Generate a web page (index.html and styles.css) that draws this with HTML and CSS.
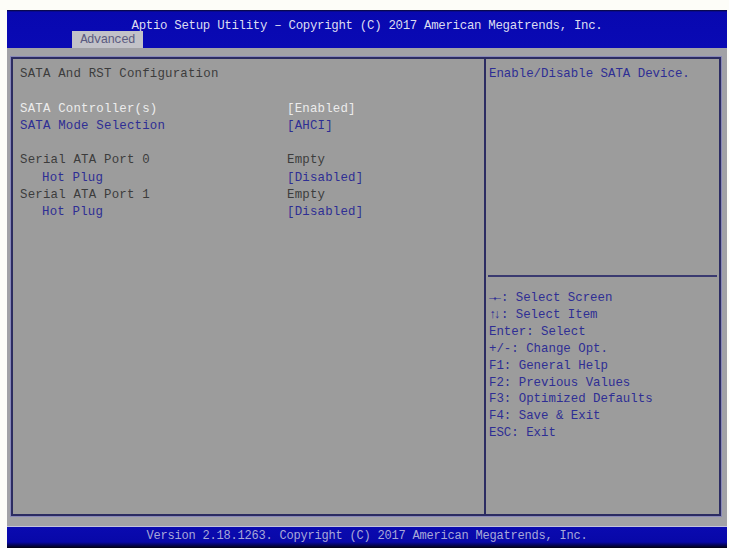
FILE: index.html
```html
<!DOCTYPE html>
<html>
<head>
<meta charset="utf-8">
<link rel="stylesheet" href="styles.css">
</head>
<body>
<div class="screen">
  <div class="header">
    <div class="title">Aptio Setup Utility – Copyright (C) 2017 American Megatrends, Inc.</div>
    <div class="tabs"><span class="tab">Advanced</span></div>
  </div>
  <div class="body">
    <div class="frame">
      <div class="main">
        <div class="row"><span class="label">SATA And RST Configuration</span></div>
        <div class="row"></div>
        <div class="row sel"><span class="label">SATA Controller(s)</span><span class="val">[Enabled]</span></div>
        <div class="row link"><span class="label">SATA Mode Selection</span><span class="val">[AHCI]</span></div>
        <div class="row"></div>
        <div class="row"><span class="label">Serial ATA Port 0</span><span class="val">Empty</span></div>
        <div class="row link"><span class="label sub">Hot Plug</span><span class="val">[Disabled]</span></div>
        <div class="row"><span class="label">Serial ATA Port 1</span><span class="val">Empty</span></div>
        <div class="row link"><span class="label sub">Hot Plug</span><span class="val">[Disabled]</span></div>
      </div>
      <div class="side">
        <div class="help">Enable/Disable SATA Device.</div>
        <div class="keys">
          <div><b class="arr">→←</b>: Select Screen</div>
          <div><b class="arr">↑↓</b>: Select Item</div>
          <div>Enter: Select</div>
          <div>+/-: Change Opt.</div>
          <div>F1: General Help</div>
          <div>F2: Previous Values</div>
          <div>F3: Optimized Defaults</div>
          <div>F4: Save &amp; Exit</div>
          <div>ESC: Exit</div>
        </div>
      </div>
    </div>
  </div>
  <div class="footer">Version 2.18.1263. Copyright (C) 2017 American Megatrends, Inc.</div>
</div>
</body>
</html>
```
FILE: styles.css
```css
html, body {
  margin: 0;
  padding: 0;
  background: #fdfdf8;
}
body {
  font-family: "Liberation Mono", "DejaVu Sans Mono", monospace;
  font-size: 12.4px;
}
.screen {
  margin: 10px 0 0 7px;
  width: 720px;
  height: 538px;
  display: flex;
  flex-direction: column;
}
.header {
  height: 38px;
  background: linear-gradient(#0a0a30 0, #0808b0 2px, #0a0ab4 100%);
  display: flex;
  flex-direction: column;
}
.title {
  color: #dcdcf0;
  text-align: center;
  height: 21px;
  line-height: 32px;
  letter-spacing: -0.3px;
}
.tabs {
  padding-left: 65px;
  display: flex;
  align-items: flex-end;
  flex: 1;
}
.tab {
  background: #c2c2c8;
  color: #5a5a80;
  height: 17px;
  line-height: 18px;
  width: 71px;
  text-align: center;
  letter-spacing: -0.6px;
}
.body {
  background: #a2a2a6;
  padding: 9px 6px 10px 4px;
  flex: 1;
  display: flex;
  border-bottom: 1px solid #c4c4dc;
}
.frame {
  flex: 1;
  border: 2px solid #2c2c62;
  box-shadow: 0 0 0 1px #8888b8;
  background: #9c9c9c;
  display: flex;
}
.main {
  width: 473px;
  border-right: 2px solid #2c2c62;
  padding: 7px 0 0 7px;
  box-sizing: border-box;
  color: #3c3c3c;
}
.row {
  height: 17.3px;
  line-height: 17.3px;
  display: flex;
  letter-spacing: 0.2px;
}
.label {
  width: 267px;
  white-space: nowrap;
}
.sub {
  padding-left: 22px;
  box-sizing: border-box;
}
.val {
  white-space: nowrap;
}
.sel {
  color: #ececec;
}
.link {
  color: #2e2e94;
}
.side {
  flex: 1;
  display: flex;
  flex-direction: column;
  color: #2e2e94;
  padding: 0 2px;
}
.help {
  height: 218px;
  padding: 7px 0 0 1px;
  box-sizing: border-box;
  line-height: 17px;
  border-bottom: 2px solid #3a3a70;
  letter-spacing: 0;
}
.keys {
  padding: 13px 0 0 1px;
  line-height: 16.9px;
  letter-spacing: 0;
}
.arr {
  letter-spacing: -3px;
  margin-right: 3px;
}
.footer {
  height: 21px;
  background: linear-gradient(#0a0ab0 0, #0808a8 15px, #000010 21px);
  color: #a8a8d8;
  text-align: center;
  line-height: 19px;
  font-size: 12px;
  letter-spacing: -0.2px;
}
```
